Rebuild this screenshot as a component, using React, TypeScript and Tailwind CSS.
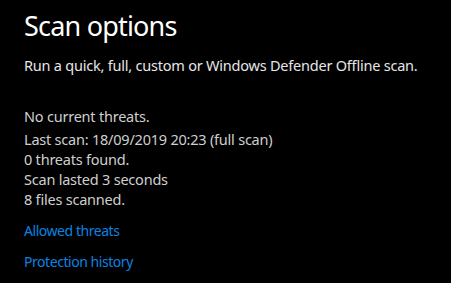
export default function App() {
  return (
    <div
      className="w-[451px] h-[283px] bg-black pl-[24px] overflow-hidden"
      style={{ fontFamily: '"Noto Sans", "Open Sans", sans-serif' }}
    >
      <h1 className="text-[27px] leading-[36px] text-white pt-[8px] font-normal tracking-[-0.8px]">Scan options</h1>
      <p className="text-[14.5px] leading-[20px] text-[#e6e6e6] mt-[11px] tracking-[-0.22px]">
        Run a quick, full, custom or Windows Defender Offline scan.
      </p>
      <div className="mt-[31px] text-[14.5px] text-[#cfcfcf] tracking-[-0.22px]">
        <p className="leading-[20px]">No current threats.</p>
        <div className="mt-[3px] leading-[20px]">
          <p>Last scan: 18/09/2019 20:23 (full scan)</p>
          <p>0 threats found.</p>
          <p>Scan lasted 3 seconds</p>
          <p>8 files scanned.</p>
        </div>
      </div>
      <div className="mt-[12px] text-[14px] text-[#0a84e0] flex flex-col gap-[11px] leading-[20px] tracking-[-0.45px]">
        <span>Allowed threats</span>
        <span>Protection history</span>
      </div>
    </div>
  );
}
